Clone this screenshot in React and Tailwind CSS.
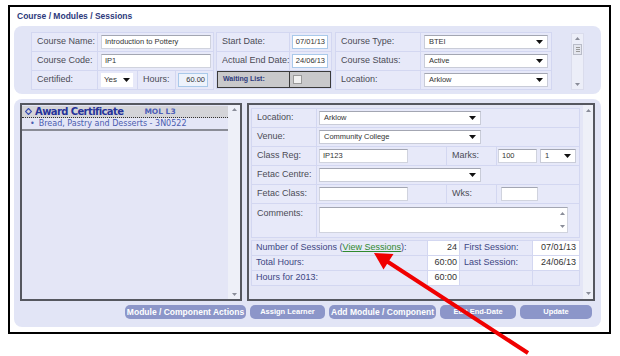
import React from "react";

// Small down triangle used by the select boxes
const Tri = () => (
  <svg width="7" height="4" viewBox="0 0 7 4" className="shrink-0">
    <path d="M0 0h7L3.5 4z" fill="#111" />
  </svg>
);

const Select = ({ className, value }) => (
  <div
    className={`flex items-center justify-between bg-white border border-[#c9ccd8] border-t-[#a3a6b2] pl-[4px] pr-[4px] text-[7.5px] text-[#333] ${className}`}
  >
    <span>{value}</span>
    <Tri />
  </div>
);

const Field = ({ className, value, right }) => (
  <div
    className={`flex items-center bg-white border border-[#d0d3de] border-t-[#a3a6b2] px-[3px] text-[7.5px] text-[#333] ${
      right ? "justify-end" : ""
    } ${className}`}
  >
    {value}
  </div>
);

const BlueField = ({ className, value }) => (
  <div
    className={`flex items-center justify-end border border-[#a9c9ea] px-[2px] text-[7.5px] text-[#333] ${className}`}
  >
    {value}
  </div>
);

const Cell = ({ className = "", children }) => (
  <div className={`flex items-center bg-[#e7e9f9] ${className}`}>{children}</div>
);

const Label = ({ className = "", children }) => (
  <Cell className={`pl-[5px] text-[9px] text-[#4b4b55] whitespace-nowrap ${className}`}>{children}</Cell>
);

const UpArrow = () => (
  <svg width="5" height="3" viewBox="0 0 5 3">
    <path d="M0 3L2.5 0L5 3z" fill="#8a8d99" />
  </svg>
);
const DownArrow = () => (
  <svg width="5" height="3" viewBox="0 0 5 3">
    <path d="M0 0h5L2.5 3z" fill="#8a8d99" />
  </svg>
);

const Button = ({ children, className = "" }) => (
  <div
    className={`h-[14px] flex items-center justify-center rounded-[5px] bg-[#8c96c9] text-white font-bold text-[7.5px] whitespace-nowrap ${className}`}
  >
    {children}
  </div>
);

export default function App() {
  return (
    <div className="relative w-[620px] h-[356px] bg-white font-['Liberation_Sans',Arial,sans-serif] overflow-hidden">
      <div className="ml-[8px] mt-[5px] w-[603px] h-[329px] border-2 border-black">
        {/* title */}
        <div className="h-[19px] flex items-center pl-[7px] text-[8.5px] font-bold text-[#2d3a7c]">
          Course / Modules / Sessions
        </div>

        {/* course details panel */}
        <div className="ml-[4px] w-[587px] h-[68px] rounded-[8px] bg-[#e2e5f6] pl-[17px] pt-[6px]">
          <div className="flex h-[58px] overflow-hidden">
            {/* column A */}
            <div className="w-[183px] flex flex-col gap-px bg-[#d3d7f1] p-px self-start">
              <div className="flex gap-px h-[18px]">
                <Label className="w-[65px]">Course Name:</Label>
                <Cell className="flex-1">
                  <Field className="ml-[3px] w-[110px] h-[14px]" value="Introduction to Pottery" />
                </Cell>
              </div>
              <div className="flex gap-px h-[18px]">
                <Label className="w-[65px]">Course Code:</Label>
                <Cell className="flex-1">
                  <Field className="ml-[3px] w-[110px] h-[14px]" value="IP1" />
                </Cell>
              </div>
              <div className="flex gap-px h-[18px]">
                <Label className="w-[65px]">Certified:</Label>
                <Cell className="w-[39px]">
                  <div className="ml-[3px] w-[32px] h-[14px] bg-white flex items-center justify-between px-[3px] text-[8px] text-[#333]">
                    <span>Yes</span>
                    <Tri />
                  </div>
                </Cell>
                <Label className="w-[37px]">Hours:</Label>
                <Cell className="flex-1">
                  <BlueField className="ml-[2px] w-[30px] h-[14px] bg-[#eef3fc]" value="60.00" />
                </Cell>
              </div>
            </div>

            {/* column B */}
            <div className="ml-[2px] w-[116px] flex flex-col gap-px bg-[#d3d7f1] p-px self-start">
              <div className="flex gap-px h-[18px]">
                <Label className="w-[72px]">Start Date:</Label>
                <Cell className="flex-1">
                  <BlueField className="ml-[2px] w-[36px] h-[14px] bg-white" value="07/01/13" />
                </Cell>
              </div>
              <div className="flex gap-px h-[18px]">
                <Label className="w-[72px] pl-[4px]">Actual End Date:</Label>
                <Cell className="flex-1">
                  <BlueField className="ml-[2px] w-[36px] h-[14px] bg-white" value="24/06/13" />
                </Cell>
              </div>
              <div className="flex h-[17px] border border-[#3a3a3a] bg-[#c9c9cb]">
                <div className="w-[72px] border-r border-[#3a3a3a] flex items-center pl-[5px] text-[7px] font-bold text-[#2d3a7c]">
                  Waiting List:
                </div>
                <div className="flex-1 flex items-center pl-[3px]">
                  <div className="w-[9px] h-[9px] bg-[#f2f2f2] border border-[#9a9a9a]" />
                </div>
              </div>
            </div>

            {/* column C */}
            <div className="ml-[3px] w-[217px] flex flex-col gap-px bg-[#d3d7f1] p-px self-start">
              <div className="flex gap-px h-[18px]">
                <Label className="w-[84px]">Course Type:</Label>
                <Cell className="flex-1">
                  <Select className="ml-[3px] w-[124px] h-[14px]" value="BTEI" />
                </Cell>
              </div>
              <div className="flex gap-px h-[18px]">
                <Label className="w-[84px]">Course Status:</Label>
                <Cell className="flex-1">
                  <Select className="ml-[3px] w-[124px] h-[14px]" value="Active" />
                </Cell>
              </div>
              <div className="flex gap-px h-[18px]">
                <Label className="w-[84px]">Location:</Label>
                <Cell className="flex-1">
                  <Select className="ml-[3px] w-[124px] h-[14px]" value="Arklow" />
                </Cell>
              </div>
              <div className="flex gap-px h-[18px]">
                <Label className="w-[84px]"></Label>
                <Cell className="flex-1 items-start pt-[1px]">
                  <Select className="ml-[3px] w-[124px] h-[14px]" value="" />
                </Cell>
              </div>
            </div>

            {/* scrollbar */}
            <div className="ml-[19px] w-[13px] h-[57px] mt-px bg-[#eceef8] border border-[#dadcec] flex flex-col items-center justify-between py-[3px]">
              <div className="flex flex-col items-center gap-[4px]">
                <UpArrow />
                <div className="w-[9px] h-[11px] bg-[#e4e6ee] border border-[#b9bcc8] flex flex-col items-center justify-center gap-px">
                  <div className="w-[4px] h-px bg-[#999]" />
                  <div className="w-[4px] h-px bg-[#999]" />
                  <div className="w-[4px] h-px bg-[#999]" />
                </div>
              </div>
              <DownArrow />
            </div>
          </div>
        </div>

        {/* modules panel */}
        <div className="ml-[4px] mt-[5px] w-[587px] h-[228px] rounded-[8px] bg-[#e2e5f6] px-[6px] pt-[4px]">
          <div className="flex gap-[5px] h-[198px]">
            {/* left box */}
            <div className="w-[222px] border-2 border-[#55575f] bg-[#e4e6f6] flex">
              <div className="w-[206px] pt-px">
                <div className="h-[12px] bg-[#d4d4d8] border-b border-dotted border-[#333] flex items-center pl-[3px]">
                  <svg width="7" height="7" viewBox="0 0 7 7">
                    <path d="M3.5 0.5L6.5 3.5L3.5 6.5L0.5 3.5z" fill="none" stroke="#3a4db0" strokeWidth="1.2" />
                  </svg>
                  <span className="ml-[3px] text-[10px] font-bold text-[#26339a] font-['DejaVu_Sans',sans-serif] tracking-[-0.6px]">
                    Award Certificate
                  </span>
                  <span className="ml-[21px] text-[7.5px] font-bold text-[#4e5fb8] font-['DejaVu_Sans',sans-serif]">
                    MOL L3
                  </span>
                </div>
                <div className="h-[13px] border-b-2 border-[#8a8c96] flex items-center pl-[8px] text-[8px] text-[#4b5cb0] font-['DejaVu_Sans',sans-serif]">
                  <span className="mr-[4px]">•</span>Bread, Pastry and Desserts - 3N0522
                </div>
              </div>
              <div className="w-[12px] bg-[#eef0f8] flex flex-col items-center justify-between py-[3px]">
                <UpArrow />
                <DownArrow />
              </div>
            </div>

            {/* right box */}
            <div className="w-[348px] border-2 border-[#55575f] bg-[#e4e6f6] flex justify-between">
              <div className="ml-[2px] mt-[3px] w-[329px]">
                <div className="flex flex-col gap-px bg-[#d3d7f1] p-px">
                  <div className="flex gap-px h-[18px]">
                    <Label className="w-[64px]">Location:</Label>
                    <Cell className="flex-1">
                      <Select className="ml-[2px] w-[162px] h-[14px]" value="Arklow" />
                    </Cell>
                  </div>
                  <div className="flex gap-px h-[18px]">
                    <Label className="w-[64px]">Venue:</Label>
                    <Cell className="flex-1">
                      <Select className="ml-[2px] w-[162px] h-[14px]" value="Community College" />
                    </Cell>
                  </div>
                  <div className="flex gap-px h-[18px]">
                    <Label className="w-[64px]">Class Reg:</Label>
                    <Cell className="w-[129px]">
                      <Field className="ml-[2px] w-[89px] h-[14px]" value="IP123" />
                    </Cell>
                    <Label className="w-[49px]">Marks:</Label>
                    <Cell className="flex-1">
                      <Field className="ml-[1px] w-[39px] h-[14px]" value="100" />
                      <Select className="ml-[3px] w-[36px] h-[14px]" value="1" />
                    </Cell>
                  </div>
                  <div className="flex gap-px h-[18px]">
                    <Label className="w-[64px]">Fetac Centre:</Label>
                    <Cell className="flex-1">
                      <Select className="ml-[2px] w-[162px] h-[14px]" value="" />
                    </Cell>
                  </div>
                  <div className="flex gap-px h-[18px]">
                    <Label className="w-[64px]">Fetac Class:</Label>
                    <Cell className="w-[129px]">
                      <Field className="ml-[2px] w-[89px] h-[14px]" value="" />
                    </Cell>
                    <Label className="w-[49px]">Wks:</Label>
                    <Cell className="flex-1">
                      <Field className="ml-[4px] w-[37px] h-[14px]" value="" />
                    </Cell>
                  </div>
                  <div className="flex gap-px h-[33px]">
                    <Label className="w-[64px] items-start pt-[3px]">Comments:</Label>
                    <Cell className="flex-1 items-start pt-[3px]">
                      <div className="ml-[2px] w-[249px] h-[26px] bg-white border border-[#d0d3de] border-t-[#a3a6b2] flex justify-end">
                        <div className="w-[9px] flex flex-col items-center justify-between py-[4px]">
                          <UpArrow />
                          <DownArrow />
                        </div>
                      </div>
                    </Cell>
                  </div>
                </div>

                {/* sessions summary */}
                <div className="mt-[2px] flex flex-col gap-px bg-[#d3d7f1] p-px text-[9px] text-[#3d4683]">
                  <div className="flex gap-px h-[14px]">
                    <Cell className="w-[175px] pl-[4px]">
                      Number of Sessions (
                      <span className="text-[#2f8a2f] underline">View Sessions</span>):
                    </Cell>
                    <div className="w-[31px] bg-white flex items-center justify-end pr-[2px] text-[#333]">24</div>
                    <Cell className="w-[72px] pl-[4px]">First Session:</Cell>
                    <div className="flex-1 bg-white flex items-center justify-end pr-[3px] text-[#333]">07/01/13</div>
                  </div>
                  <div className="flex gap-px h-[14px]">
                    <Cell className="w-[175px] pl-[4px]">Total Hours:</Cell>
                    <div className="w-[31px] bg-white flex items-center justify-end pr-[2px] text-[#333]">60:00</div>
                    <Cell className="w-[72px] pl-[4px]">Last Session:</Cell>
                    <div className="flex-1 bg-white flex items-center justify-end pr-[3px] text-[#333]">24/06/13</div>
                  </div>
                  <div className="flex gap-px h-[14px]">
                    <Cell className="w-[175px] pl-[4px]">Hours for 2013:</Cell>
                    <div className="w-[31px] bg-white flex items-center justify-end pr-[2px] text-[#333]">60:00</div>
                    <Cell className="w-[72px]" />
                    <Cell className="flex-1" />
                  </div>
                </div>
              </div>
              <div className="w-[10px] bg-[#eef0f8] flex flex-col items-center justify-between py-[4px]">
                <UpArrow />
                <DownArrow />
              </div>
            </div>
          </div>

          {/* action buttons */}
          <div className="mt-[4px] flex justify-end gap-[4px] pr-[3px]">
            <Button className="w-[121px] text-[8.5px]">Module / Component Actions</Button>
            <Button className="w-[75px]">Assign Learner</Button>
            <Button className="w-[107px] text-[8.5px]">Add Module / Component</Button>
            <Button className="w-[76px]">Edit End-Date</Button>
            <Button className="w-[72px]">Update</Button>
          </div>
        </div>
      </div>

      {/* red annotation arrow */}
      <svg className="absolute inset-0 pointer-events-none" width="620" height="356" viewBox="0 0 620 356">
        <line x1="528" y1="353" x2="385" y2="260" stroke="#f00000" strokeWidth="4" />
        <path d="M374 253 L383.5 269.5 L393.5 254 Z" fill="#f00000" />
      </svg>
    </div>
  );
}
